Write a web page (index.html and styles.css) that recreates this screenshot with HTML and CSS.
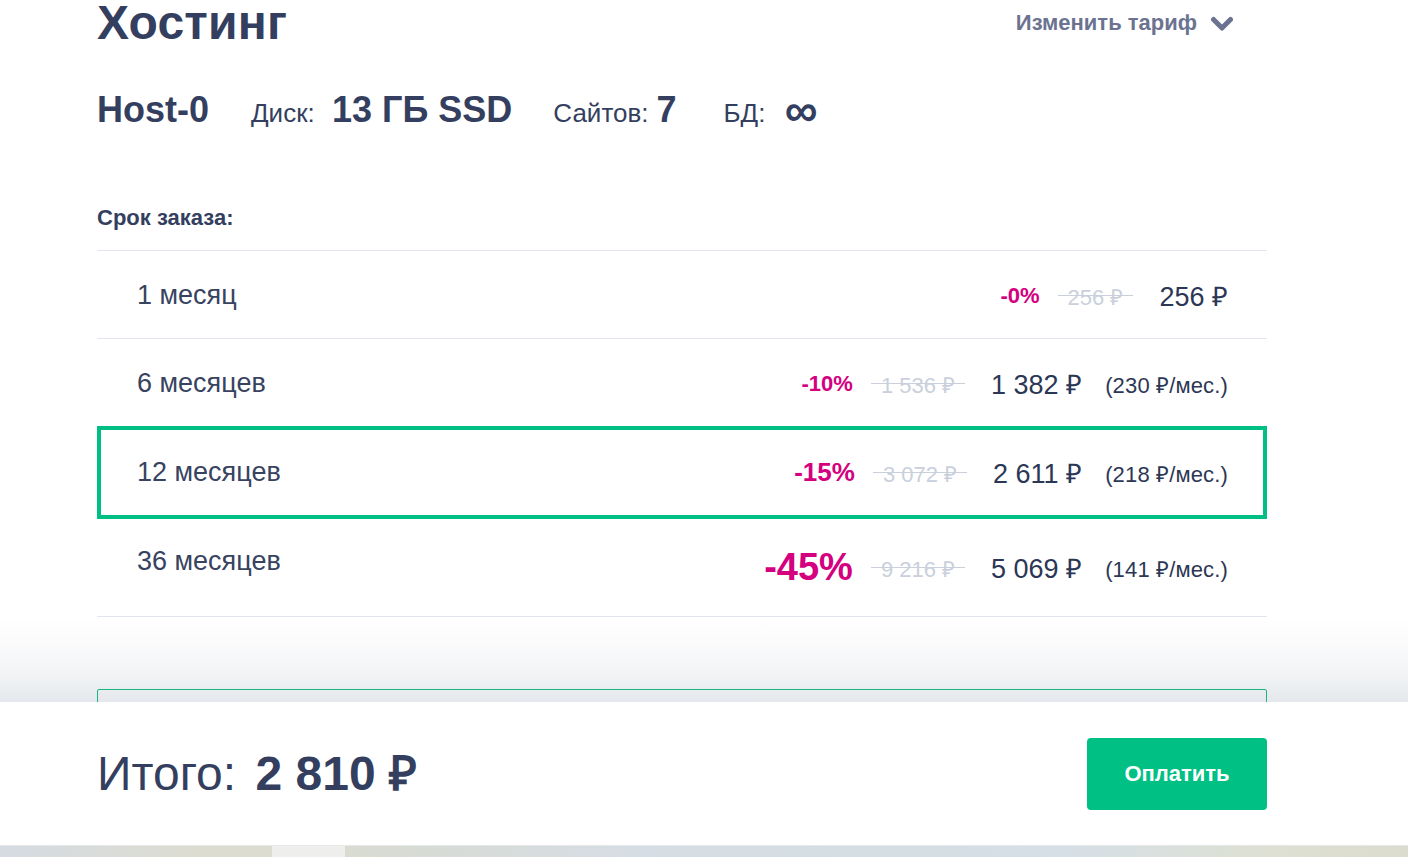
FILE: index.html
```html
<!DOCTYPE html>
<html lang="ru">
<head>
<meta charset="utf-8">
<title>Хостинг</title>
<link rel="stylesheet" href="styles.css">
</head>
<body>
<div class="wrap">
  <header class="head">
    <h1 class="title">Хостинг</h1>
    <a class="change" href="#">Изменить тариф
      <svg class="chev" width="24" height="16" viewBox="0 0 24 16"><path d="M3.5 3.5 L12 12 L20.5 3.5" fill="none" stroke="currentColor" stroke-width="5" stroke-linecap="round" stroke-linejoin="round"/></svg>
    </a>
  </header>

  <div class="specs">
    <span class="plan">Host-0</span>
    <span class="spec"><span class="spec-label">Диск: </span><b class="spec-val">13 ГБ SSD</b></span>
    <span class="spec"><span class="spec-label">Сайтов:</span><b class="spec-val val-num">7</b></span>
    <span class="spec"><span class="spec-label">БД: </span><b class="spec-val inf">∞</b></span>
  </div>

  <div class="term-label">Срок заказа:</div>

  <ul class="terms">
    <li class="term">
      <span class="term-name">1 месяц</span>
      <span class="prices">
        <span class="disc">-0%</span>
        <span class="old">256 ₽</span>
        <span class="price">256 ₽</span>
      </span>
    </li>
    <li class="term">
      <span class="term-name">6 месяцев</span>
      <span class="prices">
        <span class="disc">-10%</span>
        <span class="old">1 536 ₽</span>
        <span class="price">1 382 ₽</span>
        <span class="per">(230 ₽/мес.)</span>
      </span>
    </li>
    <li class="term term--active">
      <span class="term-name">12 месяцев</span>
      <span class="prices">
        <span class="disc disc--md">-15%</span>
        <span class="old">3 072 ₽</span>
        <span class="price">2 611 ₽</span>
        <span class="per">(218 ₽/мес.)</span>
      </span>
    </li>
    <li class="term term--last">
      <span class="term-name">36 месяцев</span>
      <span class="prices">
        <span class="disc disc--lg">-45%</span>
        <span class="old">9 216 ₽</span>
        <span class="price">5 069 ₽</span>
        <span class="per">(141 ₽/мес.)</span>
      </span>
    </li>
  </ul>
</div>

<div class="fade">
  <div class="wrap">
    <div class="next-box"></div>
  </div>
</div>

<footer class="total-bar">
  <div class="wrap total-inner">
    <div class="total"><span class="total-label">Итого:</span> <b class="total-sum">2 810 ₽</b></div>
    <button class="pay" type="button">Оплатить</button>
  </div>
</footer>

<div class="strip"><span class="strip-seg"></span></div>
</body>
</html>
```

FILE: styles.css
```css
* { box-sizing: border-box; }

html, body {
  margin: 0;
  padding: 0;
  background: #ffffff;
}

body {
  font-family: "Liberation Sans", Arial, sans-serif;
  color: #343f60;
  height: 857px;
  overflow: hidden;
}

.wrap {
  width: 1170px;
  margin-left: 97px;
}

/* header */
.head {
  display: flex;
  justify-content: space-between;
  align-items: flex-start;
  margin-top: -5px;
  height: 56px;
}

.title {
  margin: 0;
  font-size: 48px;
  line-height: 56px;
  font-weight: 700;
  color: #343f60;
  letter-spacing: 0.2px;
}

.change {
  display: flex;
  align-items: center;
  margin-top: 14px;
  margin-right: 33px;
  font-size: 22px;
  line-height: 28px;
  font-weight: 700;
  color: #6b7391;
  text-decoration: none;
}

.chev {
  margin-left: 13px;
  margin-top: 1px;
  color: #6b7391;
}

/* specs */
.specs {
  display: flex;
  align-items: baseline;
  margin-top: 37px;
  height: 44px;
  line-height: 44px;
}

.plan {
  font-size: 36px;
  font-weight: 700;
  margin-right: 42px;
}

.spec {
  display: inline-flex;
  align-items: baseline;
  margin-right: 41px;
}

.spec-label {
  font-size: 26px;
  white-space: pre;
  color: #343f60;
}

.spec-val {
  font-size: 36px;
  font-weight: 700;
  margin-left: 10px;
}

.val-num {
  margin-left: 8px;
}

.spec:nth-child(3) {
  margin-right: 47px;
}

.inf {
  font-size: 46px;
  line-height: 36px;
  margin-left: 12px;
  position: relative;
  top: 4px;
}

/* term label */
.term-label {
  margin-top: 74px;
  margin-bottom: 20px;
  font-size: 22px;
  line-height: 24px;
  font-weight: 700;
  color: #343f60;
}

/* list */
.terms {
  list-style: none;
  margin: 0;
  padding: 0;
  border-top: 1px solid #e1e6ee;
}

.term {
  display: flex;
  align-items: center;
  justify-content: space-between;
  height: 88px;
  padding: 2px 39px 0 40px;
  border-bottom: 1px solid #e1e6ee;
}

.term--active {
  margin-top: -1px;
  height: 93px;
  border: 4px solid #00bf84;
  padding: 0 35px 0 36px;
}

.term--last {
  height: 98px;
  padding-top: 0;
}

.term--last .term-name {
  margin-bottom: 12px;
}

.term-name {
  font-size: 27px;
  color: #38435f;
}

.prices {
  display: flex;
  align-items: center;
}

.disc {
  font-size: 22px;
  font-weight: 700;
  color: #d4007f;
  margin-right: 18px;
}

.disc--md { font-size: 26px; }
.disc--lg { font-size: 38px; }

.old {
  font-size: 22px;
  color: #c9d0dc;
  padding: 0 10px;
  background: linear-gradient(#c9d0dc, #c9d0dc) no-repeat center / 100% 1px;
  margin-right: 26px;
}

.price {
  font-size: 27px;
  color: #2c3756;
}

.per {
  font-size: 22px;
  color: #2c3756;
  margin-left: 23px;
  letter-spacing: 0.15px;
}

/* fade */
.fade {
  height: 85px;
  overflow: hidden;
  background: linear-gradient(to bottom, #ffffff 0%, #fbfbfc 30%, #f1f3f5 70%, #e4e7eb 100%);
}

.next-box {
  margin-top: 72px;
  height: 40px;
  border: 1px solid #1bb57f;
  border-radius: 2px;
}

/* total bar */
.total-bar {
  height: 143px;
  background: #ffffff;
}

.total-inner {
  display: flex;
  align-items: center;
  justify-content: space-between;
  height: 143px;
}

.total {
  font-size: 48px;
  line-height: 56px;
  color: #343f60;
}

.total-label { font-weight: 400; }

.total-sum {
  font-weight: 700;
  margin-left: 6px;
}

.pay {
  width: 180px;
  height: 72px;
  border: 0;
  border-radius: 4px;
  background: #00c084;
  color: #ffffff;
  font-family: "Liberation Sans", Arial, sans-serif;
  font-size: 22px;
  font-weight: 700;
  cursor: pointer;
}

/* bottom strip */
.strip {
  position: relative;
  height: 12px;
  border-top: 1px solid #e6e7e8;
  background: linear-gradient(to right, #d5dbe2 0%, #dcdcd0 14%, #dcdcd0 19%, #d7dbd3 28%, #d6dde4 45%, #d4dee3 62%, #d6dfe6 76%, #dde0d2 90%, #dcdcce 100%);
}

.strip-seg {
  position: absolute;
  left: 272px;
  top: 0;
  width: 73px;
  height: 11px;
  background: #eeefec;
}
```
